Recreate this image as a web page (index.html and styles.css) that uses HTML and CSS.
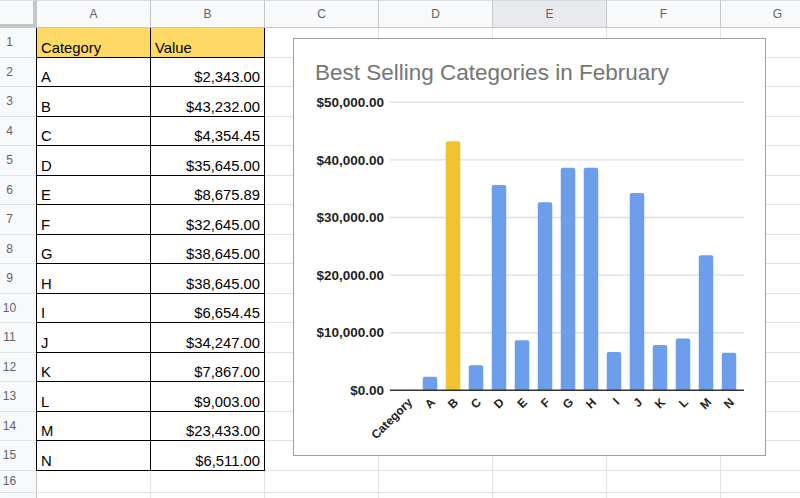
FILE: index.html
```html
<!DOCTYPE html>
<html>
<head>
<meta charset="utf-8">
<link rel="stylesheet" href="styles.css">
</head>
<body>
<div class="sheet">
  <div class="row head">
    <div class="corner"></div>
    <div class="ch">A</div>
    <div class="ch">B</div>
    <div class="ch">C</div>
    <div class="ch">D</div>
    <div class="ch sel">E</div>
    <div class="ch">F</div>
    <div class="ch">G</div>
  </div>
  <div class="row"><div class="rh">1</div><div class="c t l th">Category</div><div class="c t th">Value</div><div class="c"></div><div class="c"></div><div class="c"></div><div class="c"></div><div class="c"></div></div>
  <div class="row"><div class="rh">2</div><div class="c t l">A</div><div class="c t num">$2,343.00</div><div class="c"></div><div class="c"></div><div class="c"></div><div class="c"></div><div class="c"></div></div>
  <div class="row"><div class="rh">3</div><div class="c t l">B</div><div class="c t num">$43,232.00</div><div class="c"></div><div class="c"></div><div class="c"></div><div class="c"></div><div class="c"></div></div>
  <div class="row"><div class="rh">4</div><div class="c t l">C</div><div class="c t num">$4,354.45</div><div class="c"></div><div class="c"></div><div class="c"></div><div class="c"></div><div class="c"></div></div>
  <div class="row"><div class="rh">5</div><div class="c t l">D</div><div class="c t num">$35,645.00</div><div class="c"></div><div class="c"></div><div class="c"></div><div class="c"></div><div class="c"></div></div>
  <div class="row"><div class="rh">6</div><div class="c t l">E</div><div class="c t num">$8,675.89</div><div class="c"></div><div class="c"></div><div class="c"></div><div class="c"></div><div class="c"></div></div>
  <div class="row"><div class="rh">7</div><div class="c t l">F</div><div class="c t num">$32,645.00</div><div class="c"></div><div class="c"></div><div class="c"></div><div class="c"></div><div class="c"></div></div>
  <div class="row"><div class="rh">8</div><div class="c t l">G</div><div class="c t num">$38,645.00</div><div class="c"></div><div class="c"></div><div class="c"></div><div class="c"></div><div class="c"></div></div>
  <div class="row"><div class="rh">9</div><div class="c t l">H</div><div class="c t num">$38,645.00</div><div class="c"></div><div class="c"></div><div class="c"></div><div class="c"></div><div class="c"></div></div>
  <div class="row"><div class="rh">10</div><div class="c t l">I</div><div class="c t num">$6,654.45</div><div class="c"></div><div class="c"></div><div class="c"></div><div class="c"></div><div class="c"></div></div>
  <div class="row"><div class="rh">11</div><div class="c t l">J</div><div class="c t num">$34,247.00</div><div class="c"></div><div class="c"></div><div class="c"></div><div class="c"></div><div class="c"></div></div>
  <div class="row"><div class="rh">12</div><div class="c t l">K</div><div class="c t num">$7,867.00</div><div class="c"></div><div class="c"></div><div class="c"></div><div class="c"></div><div class="c"></div></div>
  <div class="row"><div class="rh">13</div><div class="c t l">L</div><div class="c t num">$9,003.00</div><div class="c"></div><div class="c"></div><div class="c"></div><div class="c"></div><div class="c"></div></div>
  <div class="row"><div class="rh">14</div><div class="c t l">M</div><div class="c t num">$23,433.00</div><div class="c"></div><div class="c"></div><div class="c"></div><div class="c"></div><div class="c"></div></div>
  <div class="row"><div class="rh">15</div><div class="c t l">N</div><div class="c t num">$6,511.00</div><div class="c"></div><div class="c"></div><div class="c"></div><div class="c"></div><div class="c"></div></div>
  <div class="row short"><div class="rh">16</div><div class="c"></div><div class="c"></div><div class="c"></div><div class="c"></div><div class="c"></div><div class="c"></div><div class="c"></div></div>
  <div class="row short"><div class="rh"></div><div class="c"></div><div class="c"></div><div class="c"></div><div class="c"></div><div class="c"></div><div class="c"></div><div class="c"></div></div>

  <div class="chart">
    <svg width="471" height="416" viewBox="0 0 471 416">
      <defs>
        <clipPath id="plot"><rect x="0" y="0" width="471" height="351.3"/></clipPath>
      </defs>
      <text class="title" x="21" y="40.5">Best Selling Categories in February</text>
      <g class="grid">
        <line x1="96" y1="63.3" x2="450" y2="63.3"/>
        <line x1="96" y1="120.9" x2="450" y2="120.9"/>
        <line x1="96" y1="178.5" x2="450" y2="178.5"/>
        <line x1="96" y1="236.1" x2="450" y2="236.1"/>
        <line x1="96" y1="293.7" x2="450" y2="293.7"/>
      </g>
      <g class="ylab">
        <text x="90" y="68">$50,000.00</text>
        <text x="90" y="125.6">$40,000.00</text>
        <text x="90" y="183.2">$30,000.00</text>
        <text x="90" y="240.8">$20,000.00</text>
        <text x="90" y="298.4">$10,000.00</text>
        <text x="90" y="356">$0.00</text>
      </g>
      <g class="bars" clip-path="url(#plot)">
        <rect x="128.75" y="337.8" width="14.5" height="17" rx="2"/>
        <rect class="hl" x="151.75" y="102.3" width="14.5" height="253" rx="2"/>
        <rect x="174.75" y="326.2" width="14.5" height="29" rx="2"/>
        <rect x="197.75" y="146.0" width="14.5" height="209" rx="2"/>
        <rect x="220.75" y="301.3" width="14.5" height="54" rx="2"/>
        <rect x="243.75" y="163.3" width="14.5" height="192" rx="2"/>
        <rect x="266.75" y="128.7" width="14.5" height="226" rx="2"/>
        <rect x="289.75" y="128.7" width="14.5" height="226" rx="2"/>
        <rect x="312.75" y="313.0" width="14.5" height="42" rx="2"/>
        <rect x="335.75" y="154.0" width="14.5" height="201" rx="2"/>
        <rect x="358.75" y="306.0" width="14.5" height="49" rx="2"/>
        <rect x="381.75" y="299.4" width="14.5" height="55" rx="2"/>
        <rect x="404.75" y="216.3" width="14.5" height="139" rx="2"/>
        <rect x="427.75" y="313.8" width="14.5" height="41" rx="2"/>
      </g>
      <line class="axis" x1="96" y1="351.3" x2="450" y2="351.3"/>
      <g class="xlab">
        <text transform="translate(119 364) rotate(-45)">Category</text>
        <text transform="translate(142 364) rotate(-45)">A</text>
        <text transform="translate(165 364) rotate(-45)">B</text>
        <text transform="translate(188 364) rotate(-45)">C</text>
        <text transform="translate(211 364) rotate(-45)">D</text>
        <text transform="translate(234 364) rotate(-45)">E</text>
        <text transform="translate(257 364) rotate(-45)">F</text>
        <text transform="translate(280 364) rotate(-45)">G</text>
        <text transform="translate(303 364) rotate(-45)">H</text>
        <text transform="translate(326 364) rotate(-45)">I</text>
        <text transform="translate(349 364) rotate(-45)">J</text>
        <text transform="translate(372 364) rotate(-45)">K</text>
        <text transform="translate(395 364) rotate(-45)">L</text>
        <text transform="translate(418 364) rotate(-45)">M</text>
        <text transform="translate(441 364) rotate(-45)">N</text>
      </g>
    </svg>
  </div>
</div>
</body>
</html>
```

FILE: styles.css
```css
html, body {
  margin: 0;
  padding: 0;
  background: #ffffff;
}
body {
  width: 800px;
  height: 498px;
  overflow: hidden;
  font-family: "Liberation Sans", Arial, sans-serif;
}
.sheet {
  position: relative;
  width: 800px;
  height: 498px;
  overflow: hidden;
}
.row {
  display: flex;
  height: 29.5px;
  width: 900px;
}
.row.short {
  height: 22.5px;
}
.row.head {
  height: 28px;
}
.corner {
  box-sizing: border-box;
  width: 37px;
  flex: none;
  background: #f8f9fa;
  border-top: 1px solid #dadce0;
  border-right: 4px solid #c4c7c5;
  border-bottom: 4px solid #c4c7c5;
}
.ch {
  box-sizing: border-box;
  width: 114px;
  flex: none;
  background: #f8f9fa;
  border-top: 1px solid #dadce0;
  border-right: 1px solid #c4c7c5;
  border-bottom: 1px solid #c4c7c5;
  display: flex;
  align-items: center;
  justify-content: center;
  font-size: 12px;
  color: #5f6368;
  padding-bottom: 1px;
}
.ch.sel {
  background: #e8eaed;
}
.rh {
  box-sizing: border-box;
  width: 37px;
  flex: none;
  background: #f8f9fa;
  border-right: 1px solid #c4c7c5;
  border-bottom: 1px solid #e2e3e3;
  display: flex;
  align-items: center;
  justify-content: center;
  padding-right: 17px;
  font-size: 12px;
  color: #5f6368;
}
.c {
  box-sizing: border-box;
  width: 114px;
  flex: none;
  border-right: 1px solid #e2e3e3;
  border-bottom: 1px solid #e2e3e3;
  display: flex;
  align-items: flex-end;
  padding: 0 4px 1px 4px;
  font-size: 14.8px;
  color: #000000;
  white-space: nowrap;
}
.c.t {
  border-right-color: #000000;
  border-bottom-color: #000000;
}
.c.l {
  box-shadow: -1px 0 0 #000000;
}
.c.th {
  background: #ffd966;
}
.c.num {
  justify-content: flex-end;
}
.chart {
  position: absolute;
  left: 293px;
  top: 38px;
  width: 471px;
  height: 416px;
  border: 1px solid #9e9e9e;
  background: #ffffff;
}
.chart svg {
  display: block;
}
.title {
  font-family: "Liberation Sans", Arial, sans-serif;
  font-size: 22.5px;
  fill: #757575;
}
.grid line {
  stroke: #e0e0e0;
  stroke-width: 1.4;
}
.axis {
  stroke: #333333;
  stroke-width: 1.5;
}
.ylab text {
  font-family: "Liberation Sans", Arial, sans-serif;
  font-size: 13.5px;
  font-weight: bold;
  fill: #1f1f1f;
  text-anchor: end;
}
.bars rect {
  fill: #6d9eeb;
}
.bars rect.hl {
  fill: #f1c232;
}
.xlab text {
  font-family: "Liberation Sans", Arial, sans-serif;
  font-size: 12px;
  font-weight: bold;
  fill: #222222;
  text-anchor: end;
}
```
